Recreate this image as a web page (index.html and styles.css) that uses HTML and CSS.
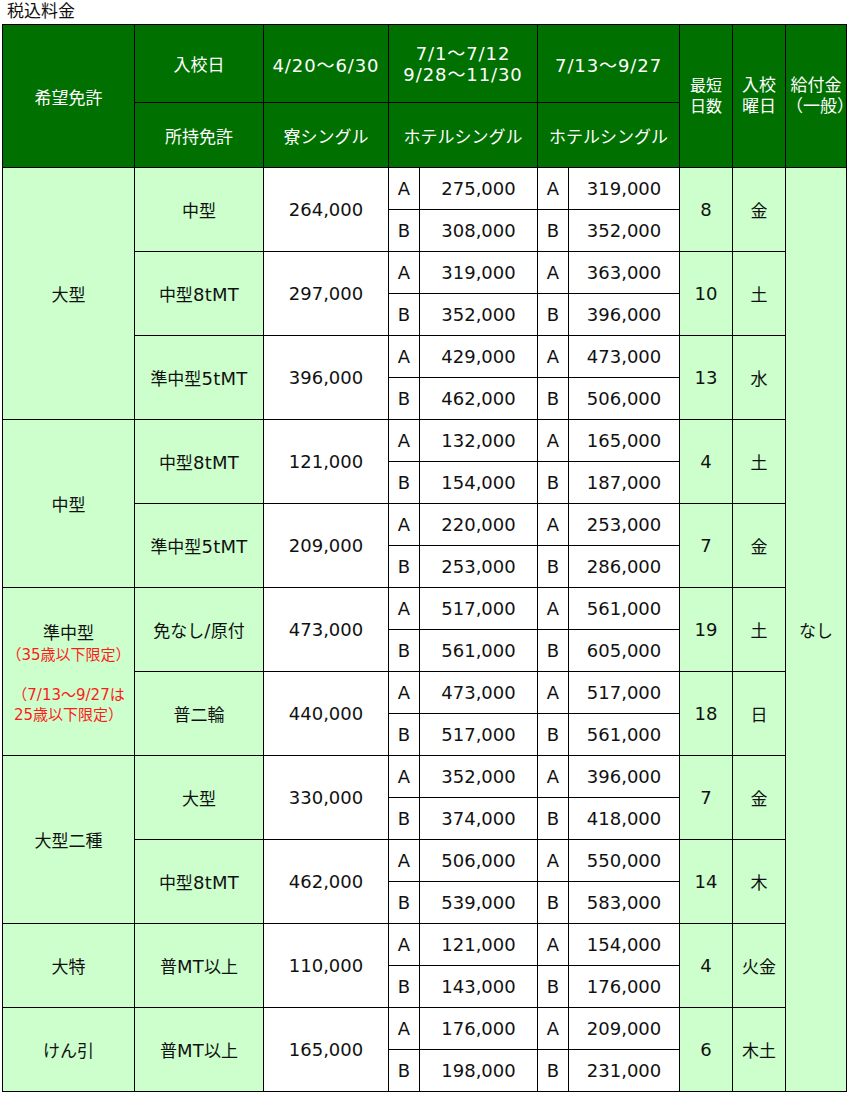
FILE: index.html
```html
<!DOCTYPE html>
<html lang="ja">
<head>
<meta charset="utf-8">
<title>税込料金</title>
<link rel="stylesheet" href="styles.css">
</head>
<body>
<div class="title">税込料金</div>
<table class="price">
  <colgroup>
    <col class="w1"><col class="w2"><col class="w3"><col class="w4"><col class="w5"><col class="w6"><col class="w7"><col class="w8"><col class="w9"><col class="w10">
  </colgroup>
  <thead>
    <tr class="h1">
      <th rowspan="2">希望免許</th>
      <th>入校日</th>
      <th class="d">4/20～6/30</th>
      <th colspan="2" class="d tight">7/1～7/12<br>9/28～11/30</th>
      <th colspan="2" class="d">7/13～9/27</th>
      <th rowspan="2" class="small tight">最短<br>日数</th>
      <th rowspan="2" class="tight">入校<br>曜日</th>
      <th rowspan="2" class="tight">給付金<br>（一般）</th>
    </tr>
    <tr class="h2">
      <th>所持免許</th>
      <th>寮シングル</th>
      <th colspan="2">ホテルシングル</th>
      <th colspan="2">ホテルシングル</th>
    </tr>
  </thead>
  <tbody>
    <tr>
      <td rowspan="6" class="g">大型</td>
      <td rowspan="2" class="g">中型</td>
      <td rowspan="2" class="n">264,000</td>
      <td class="n">A</td><td class="n">275,000</td><td class="n">A</td><td class="n">319,000</td>
      <td rowspan="2" class="g n">8</td>
      <td rowspan="2" class="g">金</td>
      <td rowspan="22" class="g">なし</td>
    </tr>
    <tr><td class="n">B</td><td class="n">308,000</td><td class="n">B</td><td class="n">352,000</td></tr>
    <tr>
      <td rowspan="2" class="g">中型<span class="l">8tMT</span></td>
      <td rowspan="2" class="n">297,000</td>
      <td class="n">A</td><td class="n">319,000</td><td class="n">A</td><td class="n">363,000</td>
      <td rowspan="2" class="g n">10</td>
      <td rowspan="2" class="g">土</td>
    </tr>
    <tr><td class="n">B</td><td class="n">352,000</td><td class="n">B</td><td class="n">396,000</td></tr>
    <tr>
      <td rowspan="2" class="g">準中型<span class="l">5tMT</span></td>
      <td rowspan="2" class="n">396,000</td>
      <td class="n">A</td><td class="n">429,000</td><td class="n">A</td><td class="n">473,000</td>
      <td rowspan="2" class="g n">13</td>
      <td rowspan="2" class="g">水</td>
    </tr>
    <tr><td class="n">B</td><td class="n">462,000</td><td class="n">B</td><td class="n">506,000</td></tr>

    <tr>
      <td rowspan="4" class="g">中型</td>
      <td rowspan="2" class="g">中型<span class="l">8tMT</span></td>
      <td rowspan="2" class="n">121,000</td>
      <td class="n">A</td><td class="n">132,000</td><td class="n">A</td><td class="n">165,000</td>
      <td rowspan="2" class="g n">4</td>
      <td rowspan="2" class="g">土</td>
    </tr>
    <tr><td class="n">B</td><td class="n">154,000</td><td class="n">B</td><td class="n">187,000</td></tr>
    <tr>
      <td rowspan="2" class="g">準中型<span class="l">5tMT</span></td>
      <td rowspan="2" class="n">209,000</td>
      <td class="n">A</td><td class="n">220,000</td><td class="n">A</td><td class="n">253,000</td>
      <td rowspan="2" class="g n">7</td>
      <td rowspan="2" class="g">金</td>
    </tr>
    <tr><td class="n">B</td><td class="n">253,000</td><td class="n">B</td><td class="n">286,000</td></tr>

    <tr>
      <td rowspan="4" class="g">準中型<br><span class="note">（35歳以下限定）<br><br>（7/13～9/27は<br>25歳以下限定）</span></td>
      <td rowspan="2" class="g">免なし<span class="l">/</span>原付</td>
      <td rowspan="2" class="n">473,000</td>
      <td class="n">A</td><td class="n">517,000</td><td class="n">A</td><td class="n">561,000</td>
      <td rowspan="2" class="g n">19</td>
      <td rowspan="2" class="g">土</td>
    </tr>
    <tr><td class="n">B</td><td class="n">561,000</td><td class="n">B</td><td class="n">605,000</td></tr>
    <tr>
      <td rowspan="2" class="g">普二輪</td>
      <td rowspan="2" class="n">440,000</td>
      <td class="n">A</td><td class="n">473,000</td><td class="n">A</td><td class="n">517,000</td>
      <td rowspan="2" class="g n">18</td>
      <td rowspan="2" class="g">日</td>
    </tr>
    <tr><td class="n">B</td><td class="n">517,000</td><td class="n">B</td><td class="n">561,000</td></tr>

    <tr>
      <td rowspan="4" class="g">大型二種</td>
      <td rowspan="2" class="g">大型</td>
      <td rowspan="2" class="n">330,000</td>
      <td class="n">A</td><td class="n">352,000</td><td class="n">A</td><td class="n">396,000</td>
      <td rowspan="2" class="g n">7</td>
      <td rowspan="2" class="g">金</td>
    </tr>
    <tr><td class="n">B</td><td class="n">374,000</td><td class="n">B</td><td class="n">418,000</td></tr>
    <tr>
      <td rowspan="2" class="g">中型<span class="l">8tMT</span></td>
      <td rowspan="2" class="n">462,000</td>
      <td class="n">A</td><td class="n">506,000</td><td class="n">A</td><td class="n">550,000</td>
      <td rowspan="2" class="g n">14</td>
      <td rowspan="2" class="g">木</td>
    </tr>
    <tr><td class="n">B</td><td class="n">539,000</td><td class="n">B</td><td class="n">583,000</td></tr>

    <tr>
      <td rowspan="2" class="g">大特</td>
      <td rowspan="2" class="g">普<span class="l">MT</span>以上</td>
      <td rowspan="2" class="n">110,000</td>
      <td class="n">A</td><td class="n">121,000</td><td class="n">A</td><td class="n">154,000</td>
      <td rowspan="2" class="g n">4</td>
      <td rowspan="2" class="g">火金</td>
    </tr>
    <tr><td class="n">B</td><td class="n">143,000</td><td class="n">B</td><td class="n">176,000</td></tr>

    <tr>
      <td rowspan="2" class="g">けん引</td>
      <td rowspan="2" class="g">普<span class="l">MT</span>以上</td>
      <td rowspan="2" class="n">165,000</td>
      <td class="n">A</td><td class="n">176,000</td><td class="n">A</td><td class="n">209,000</td>
      <td rowspan="2" class="g n">6</td>
      <td rowspan="2" class="g">木土</td>
    </tr>
    <tr><td class="n">B</td><td class="n">198,000</td><td class="n">B</td><td class="n">231,000</td></tr>
  </tbody>
</table>
</body>
</html>
```

FILE: styles.css
```css
html, body {
  margin: 0;
  padding: 0;
  background: #fff;
}
body {
  padding: 0 2px;
  font-family: "DejaVu Sans", "Noto Sans CJK JP", sans-serif;
  font-size: 17px;
  color: #111;
}
.title {
  height: 24px;
  line-height: 22px;
  padding-left: 5px;
  font-size: 17px;
}
.price {
  border-collapse: collapse;
  table-layout: fixed;
  width: 845px;
}
.w1 { width: 132px; }
.w2 { width: 129px; }
.w3 { width: 125px; }
.w4 { width: 31px; }
.w5 { width: 118px; }
.w6 { width: 31px; }
.w7 { width: 111px; }
.w8 { width: 53px; }
.w9 { width: 53px; }
.w10 { width: 61px; }
.price th, .price td {
  border: 1px solid #000;
  padding: 0;
  text-align: center;
  vertical-align: middle;
  font-weight: normal;
  white-space: nowrap;
}
.price th {
  background: #007000;
  color: #fff;
}
.price tr.h1 { height: 78px; }
.price tr.h2 { height: 65px; }
.price tbody tr { height: 42px; }
.price td { background: #fff; }
.price td.g { background: #ccffcc; }
.price .n { font-size: 18px; }
.price .l { font-size: 18px; letter-spacing: 0.3px; }
.price .d { font-size: 18px; letter-spacing: 0.9px; }
.tight { line-height: 21px; }
.small { font-size: 16px; }
.note {
  color: #ff1a1a;
  font-size: 15px;
  line-height: 17px;
}
```
